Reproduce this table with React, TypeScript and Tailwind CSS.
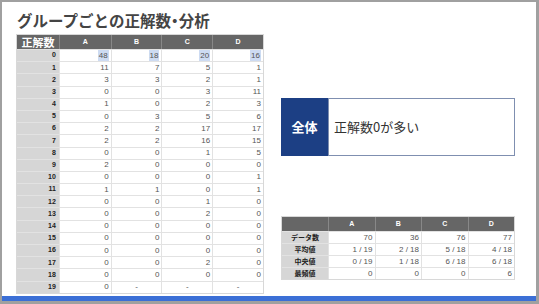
import React from 'react';

const rows: (number | string)[][] = [
  [48, 18, 20, 16],
  [11, 7, 5, 1],
  [3, 3, 2, 1],
  [0, 0, 3, 11],
  [1, 0, 2, 3],
  [0, 3, 5, 6],
  [2, 2, 17, 17],
  [2, 2, 16, 15],
  [0, 0, 1, 5],
  [2, 0, 0, 0],
  [0, 0, 0, 1],
  [1, 1, 0, 1],
  [0, 0, 1, 0],
  [0, 0, 2, 0],
  [0, 0, 0, 0],
  [0, 0, 0, 0],
  [0, 0, 0, 0],
  [0, 0, 2, 0],
  [0, 0, 0, 0],
  [0, '-', '-', '-'],
];

const stats = [
  { label: 'データ数', values: ['70', '36', '76', '77'] },
  { label: '平均値', values: ['1 / 19', '2 / 18', '5 / 18', '4 / 18'] },
  { label: '中央値', values: ['0 / 19', '1 / 18', '6 / 18', '6 / 18'] },
  { label: '最頻値', values: ['0', '0', '0', '6'] },
];

const cols = ['A', 'B', 'C', 'D'];
const mainWidths = ['w-[52px]', 'w-[51px]', 'w-[51px]', 'w-[51px]'];

const jp = { fontFamily: '"Noto Sans CJK JP", sans-serif' };
const num = { fontFamily: '"Liberation Sans", Arial, sans-serif' };

const CountTable: React.FC = () => (
  <div className="flex flex-col border border-[#d8d8d8] w-[248px]">
    <div className="flex h-[14px] bg-[#666666] text-white">
      <div className="w-[42px] flex items-center justify-center text-[11px] font-bold leading-none" style={jp}>
        正解数
      </div>
      {cols.map((c, i) => (
        <div
          key={c}
          className={`${mainWidths[i]} flex items-center justify-center text-[7px] font-bold border-l border-[#888]`}
          style={num}
        >
          {c}
        </div>
      ))}
    </div>
    {rows.map((r, ri) => (
      <div key={ri} className="flex h-[12.2px] border-t border-[#e2e2e2]">
        <div className="w-[42px] bg-[#d6d6d6] flex items-center justify-end pr-[3px] text-[7px] font-bold text-[#222]" style={num}>
          {ri}
        </div>
        {r.map((v, ci) => (
          <div
            key={ci}
            className={`${mainWidths[ci]} flex items-center ${v === '-' ? 'justify-center' : 'justify-end pr-[2px]'} text-[8px] text-[#555] border-l border-[#e2e2e2] bg-white`}
            style={num}
          >
            {ri === 0 ? <span className="bg-[#cddbf2] px-[1px]">{v}</span> : v}
          </div>
        ))}
      </div>
    ))}
  </div>
);

const StatsTable: React.FC = () => (
  <div className="flex flex-col border border-[#d8d8d8] w-[234px]">
    <div className="flex h-[14px] bg-[#666666] text-white">
      <div className="w-[46px]" />
      {cols.map((c) => (
        <div key={c} className="flex-1 flex items-center justify-center text-[7px] font-bold border-l border-[#888]" style={num}>
          {c}
        </div>
      ))}
    </div>
    {stats.map((s) => (
      <div key={s.label} className="flex h-[12px] border-t border-[#e2e2e2]">
        <div className="w-[46px] bg-[#d6d6d6] flex items-center justify-center text-[7px] font-bold text-[#222]" style={jp}>
          {s.label}
        </div>
        {s.values.map((v, i) => (
          <div key={i} className="flex-1 flex items-center justify-end pr-[2px] text-[8px] text-[#555] border-l border-[#e2e2e2] bg-white" style={num}>
            {v}
          </div>
        ))}
      </div>
    ))}
  </div>
);

export default function App() {
  return (
    <div className="w-[539px] h-[304px] bg-[#a0a0a0] flex flex-col">
      <div className="flex-1 ml-[2px] mr-[3px] mt-[2px] bg-white flex flex-col overflow-hidden">
        <h1 className="ml-[15px] mt-[8px] h-[24px] text-[15.5px] font-bold text-[#444] leading-[20px]" style={jp}>
          グループごとの正解数<span className="[font-feature-settings:'palt']">・</span>分析
        </h1>
        <div className="flex">
          <div className="ml-[14px]">
            <CountTable />
          </div>
          <div className="ml-[17px] flex flex-col">
            <div className="mt-[64px] flex h-[58px] w-[234px]">
              <div className="w-[47px] bg-[#1c3f84] flex items-center justify-center text-white text-[13px] font-bold" style={jp}>
                全体
              </div>
              <div className="flex-1 border border-[#7f8fb0] flex items-center pl-[5px] text-[13px] text-[#333]" style={jp}>
                正解数0が多い
              </div>
            </div>
            <div className="mt-[60px]">
              <StatsTable />
            </div>
          </div>
        </div>
      </div>
      <div className="h-[5px] bg-[#3b6fd6] ml-[2px] mr-[3px] mb-[3px]" />
    </div>
  );
}
